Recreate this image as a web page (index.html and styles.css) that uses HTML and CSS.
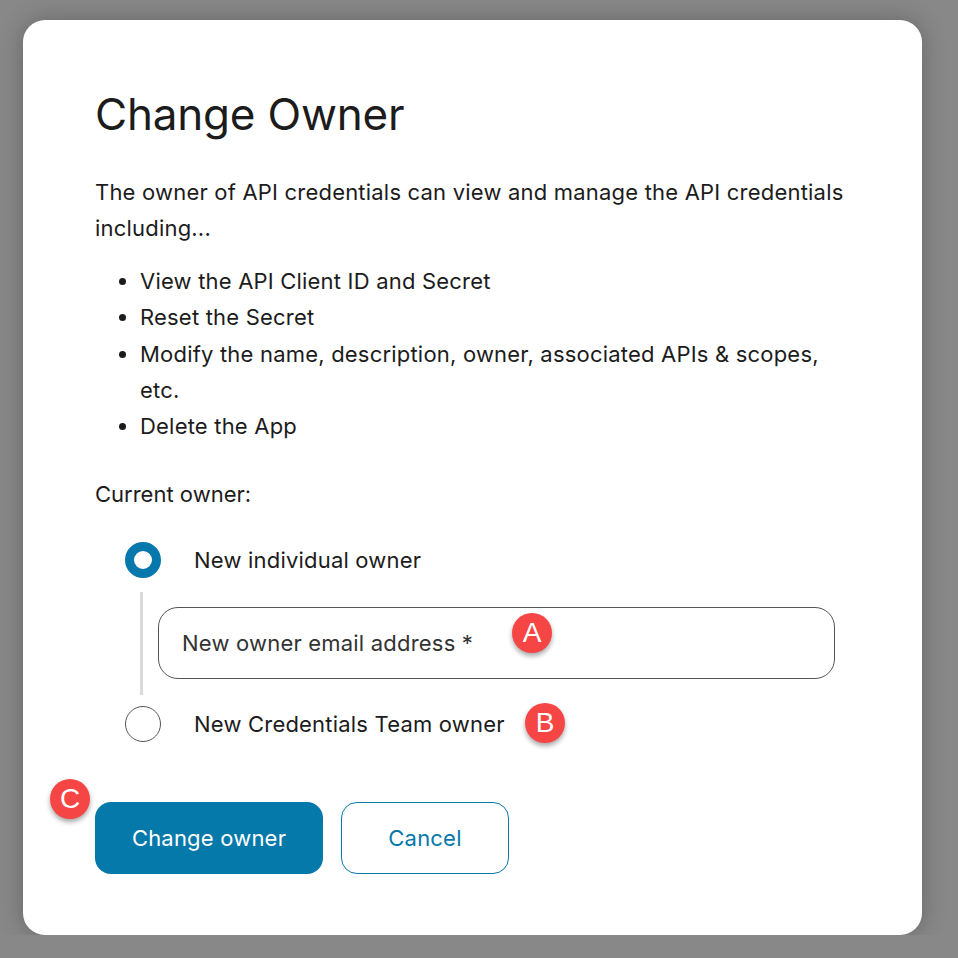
FILE: index.html
```html
<!DOCTYPE html>
<html lang="en">
<head>
<meta charset="UTF-8">
<meta name="viewport" content="width=device-width, initial-scale=1.0">
<title>Change Owner</title>
<link rel="stylesheet" href="styles.css">
</head>
<body>

<div class="dialog">
    <h1 class="title">Change Owner</h1>
    <p class="intro">The owner of API credentials can view and manage the API credentials including...</p>
    <ul class="perms">
        <li>View the API Client ID and Secret</li>
        <li>Reset the Secret</li>
        <li>Modify the name, description, owner, associated APIs &amp; scopes, etc.</li>
        <li>Delete the App</li>
    </ul>
    <p class="current">Current owner:</p>

    <div class="options">
        <label class="option">
            <span class="radio checked"></span>
            <span class="option-label">New individual owner</span>
        </label>
        <div class="nested">
            <div class="field">
                New owner email address *
                <span class="marker marker-a">A</span>
            </div>
        </div>
        <label class="option">
            <span class="radio"></span>
            <span class="option-label">New Credentials Team owner</span>
            <span class="marker marker-b">B</span>
        </label>
    </div>

    <div class="actions">
        <span class="marker marker-c">C</span>
        <button class="btn primary">Change owner</button>
        <button class="btn secondary">Cancel</button>
    </div>
</div>

</body>
</html>
```

FILE: styles.css
```css
body {
    margin: 0;
    background-color: #888;
    font-family: 'Inter', 'Liberation Sans', sans-serif;
    color: #1c1c1c;
}

.dialog {
    width: 899px;
    box-sizing: border-box;
    margin: 20px 0 0 23px;
    padding: 68px 72px 61px 72px;
    background-color: #fff;
    border-radius: 22px;
    box-shadow: 0 0 24px rgba(0, 0, 0, 0.25);
}

.title {
    margin: 0;
    font-size: 44px;
    font-weight: 400;
    line-height: 53px;
    letter-spacing: -0.2px;
}

.intro {
    margin: 33px 0 0 0;
    font-size: 22px;
    line-height: 36px;
    letter-spacing: 0.2px;
}

.perms {
    margin: 17px 0 0 0;
    padding-left: 45px;
    font-size: 22px;
    line-height: 36.3px;
    letter-spacing: 0.2px;
}

.current {
    margin: 32px 0 0 0;
    font-size: 22px;
    line-height: 36px;
}

.options {
    margin-top: 30px;
    padding-left: 30px;
}

.option {
    position: relative;
    display: flex;
    align-items: center;
    gap: 33px;
    height: 36px;
}

.radio {
    width: 36px;
    height: 36px;
    box-sizing: border-box;
    border: 1px solid #555;
    border-radius: 50%;
    flex-shrink: 0;
}

.radio.checked {
    border: 9.5px solid #0678ab;
}

.option-label {
    font-size: 22px;
    letter-spacing: 0.2px;
}

.nested {
    margin: 14px 15px 11px 15px;
    padding: 15px 0 16px 15px;
    border-left: 3px solid #dadada;
}

.field {
    position: relative;
    height: 72px;
    box-sizing: border-box;
    display: flex;
    align-items: center;
    padding-left: 23px;
    border: 1px solid #555;
    border-radius: 20px;
    font-size: 22px;
    letter-spacing: 0.2px;
    color: #333;
}

.actions {
    position: relative;
    display: flex;
    gap: 18px;
    margin-top: 60px;
}

.btn {
    height: 72px;
    box-sizing: border-box;
    border-radius: 16px;
    font-family: 'Inter', 'Liberation Sans', sans-serif;
    font-size: 22px;
    letter-spacing: 0.2px;
    cursor: pointer;
}

.btn.primary {
    width: 228px;
    background-color: #0679ab;
    border: none;
    color: #fff;
}

.btn.secondary {
    width: 168px;
    background-color: #fff;
    border: 1px solid #0679ab;
    color: #0679ab;
}

/* red annotation dots */
.marker {
    position: absolute;
    width: 40px;
    height: 40px;
    border-radius: 50%;
    background-color: #f64545;
    color: #fff;
    font-family: 'Liberation Sans', sans-serif;
    font-size: 28px;
    letter-spacing: 0;
    line-height: 40px;
    text-align: center;
    box-shadow: 0 3px 5px rgba(0, 0, 0, 0.35);
}

.marker-a {
    left: 353px;
    top: 5px;
}

.marker-b {
    left: 400px;
    top: -3px;
}

.marker-c {
    left: -45px;
    top: -23px;
}
```
